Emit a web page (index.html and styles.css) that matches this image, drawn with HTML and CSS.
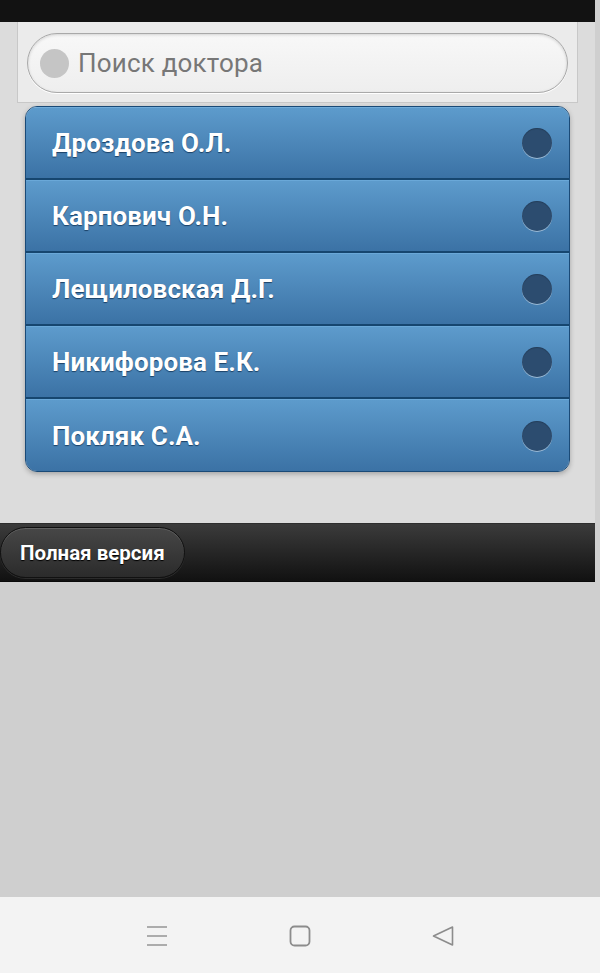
FILE: index.html
```html
<!DOCTYPE html>
<html lang="ru">
<head>
<meta charset="utf-8">
<title>Поиск доктора</title>
<link rel="stylesheet" href="styles.css">
</head>
<body>
<div class="page">
  <div class="topbar"></div>
  <div class="search-wrap">
    <div class="search">
      <span class="search-icon"></span>
      <span class="placeholder">Поиск доктора</span>
    </div>
  </div>
  <ul class="list">
    <li class="item"><span class="name">Дроздова О.Л.</span><span class="arrow"></span></li>
    <li class="item"><span class="name">Карпович О.Н.</span><span class="arrow"></span></li>
    <li class="item"><span class="name">Лещиловская Д.Г.</span><span class="arrow"></span></li>
    <li class="item"><span class="name">Никифорова Е.К.</span><span class="arrow"></span></li>
    <li class="item"><span class="name">Покляк С.А.</span><span class="arrow"></span></li>
  </ul>
  <div class="footer"><a class="btn">Полная версия</a></div>
</div>
<div class="filler"></div>
<div class="navbar">
  <svg class="nav-icon" width="22" height="22" viewBox="0 0 22 22"><g stroke="#9a9a9a" stroke-width="1.6" fill="none"><line x1="1" y1="2" x2="21" y2="2"/><line x1="1" y1="11" x2="21" y2="11"/><line x1="1" y1="20" x2="21" y2="20"/></g></svg>
  <svg class="nav-icon" width="22" height="22" viewBox="0 0 22 22"><rect x="1.5" y="1.5" width="19" height="19" rx="4" stroke="#8c8c8c" stroke-width="1.8" fill="none"/></svg>
  <svg class="nav-icon" width="22" height="22" viewBox="0 0 22 22"><path d="M1.5 11 L20.5 2 L20.5 20 Z" stroke="#8c8c8c" stroke-width="1.6" stroke-linejoin="round" fill="none"/></svg>
</div>
</body>
</html>
```
FILE: styles.css
```css
html { background: #e4e4e4; }
body {
  margin: 0;
  width: 600px;
  height: 973px;
  display: flex;
  flex-direction: column;
  font-family: Roboto, "Noto Sans", "Liberation Sans", sans-serif;
  background: #cfcfcf;
}
.page {
  width: 595px;
  background: #dcdcdc;
  display: flex;
  flex-direction: column;
}
.topbar {
  height: 22px;
  background: #121212;
}
.search-wrap {
  margin-left: 17px;
  width: 561px;
  padding: 11px 0 9px 9px;
  box-sizing: border-box;
  background: #ebebeb;
  border: 1px solid #c8c8c8;
  border-top: none;
}
.search {
  width: 541px;
  height: 60px;
  box-sizing: border-box;
  border: 1px solid #a9a9a9;
  border-radius: 30px;
  background: linear-gradient(#f8f8f8, #eeeeee);
  box-shadow: inset 0 1px 3px rgba(0,0,0,0.15), 0 1px 0 #fff;
  display: flex;
  align-items: center;
  padding-left: 12px;
}
.search-icon {
  width: 29px;
  height: 29px;
  border-radius: 50%;
  background: #c5c5c5;
  flex: none;
}
.placeholder {
  margin-left: 9px;
  font-size: 26px;
  color: #777;
  letter-spacing: 0.2px;
}
.list {
  list-style: none;
  margin: 3px 0 0 25px;
  padding: 0;
  width: 545px;
  box-sizing: border-box;
  border: 1px solid #1a4a77;
  border-radius: 12px;
  overflow: hidden;
  box-shadow: 0 2px 5px rgba(0,0,0,0.25);
}
.item {
  display: flex;
  align-items: center;
  justify-content: space-between;
  padding: 0 17px 0 26px;
  background: linear-gradient(#5d9bcc, #3b72a5);
  border-top: 1px solid #6aa8d8;
  box-sizing: border-box;
  border-bottom: 2px solid #16466f;
  height: 73px;
}
.item:first-child { border-top-color: #71acd9; }
.item:last-child { border-bottom: none; height: 72px; }
.name {
  color: #fff;
  font-weight: 700;
  font-size: 26px;
  letter-spacing: 0.1px;
  text-shadow: 0 1px 1px #1b4166;
}
.arrow {
  width: 30px;
  height: 30px;
  border-radius: 50%;
  background: #2c4c6f;
  box-shadow: 0 1px 0 rgba(255,255,255,0.45), inset 0 1px 1px rgba(0,0,0,0.2);
}
.footer {
  margin-top: 51px;
  height: 59px;
  box-sizing: border-box;
  border-top: 1px solid #2e2e2e;
  border-bottom: 1px solid #0a0a0a;
  background: linear-gradient(#3b3b3b, #111);
  display: flex;
  align-items: center;
}
.btn {
  width: 185px;
  height: 51px;
  box-sizing: border-box;
  border: 1px solid #111;
  border-radius: 26px;
  background: linear-gradient(#474747, #2b2b2b);
  box-shadow: inset 0 1px 0 rgba(255,255,255,0.15), 0 1px 0 rgba(255,255,255,0.1);
  display: flex;
  align-items: center;
  padding-left: 19px;
  color: #fff;
  font-weight: 700;
  font-size: 20.5px;
  text-shadow: 0 1px 1px #000;
}
.filler {
  flex: 1;
  background: #cfcfcf;
}
.navbar {
  height: 76px;
  background: #f3f3f3;
  display: flex;
  align-items: center;
  justify-content: center;
  gap: 121px;
  padding-top: 2px;
  box-sizing: border-box;
}
.nav-icon { display: block; }
```
